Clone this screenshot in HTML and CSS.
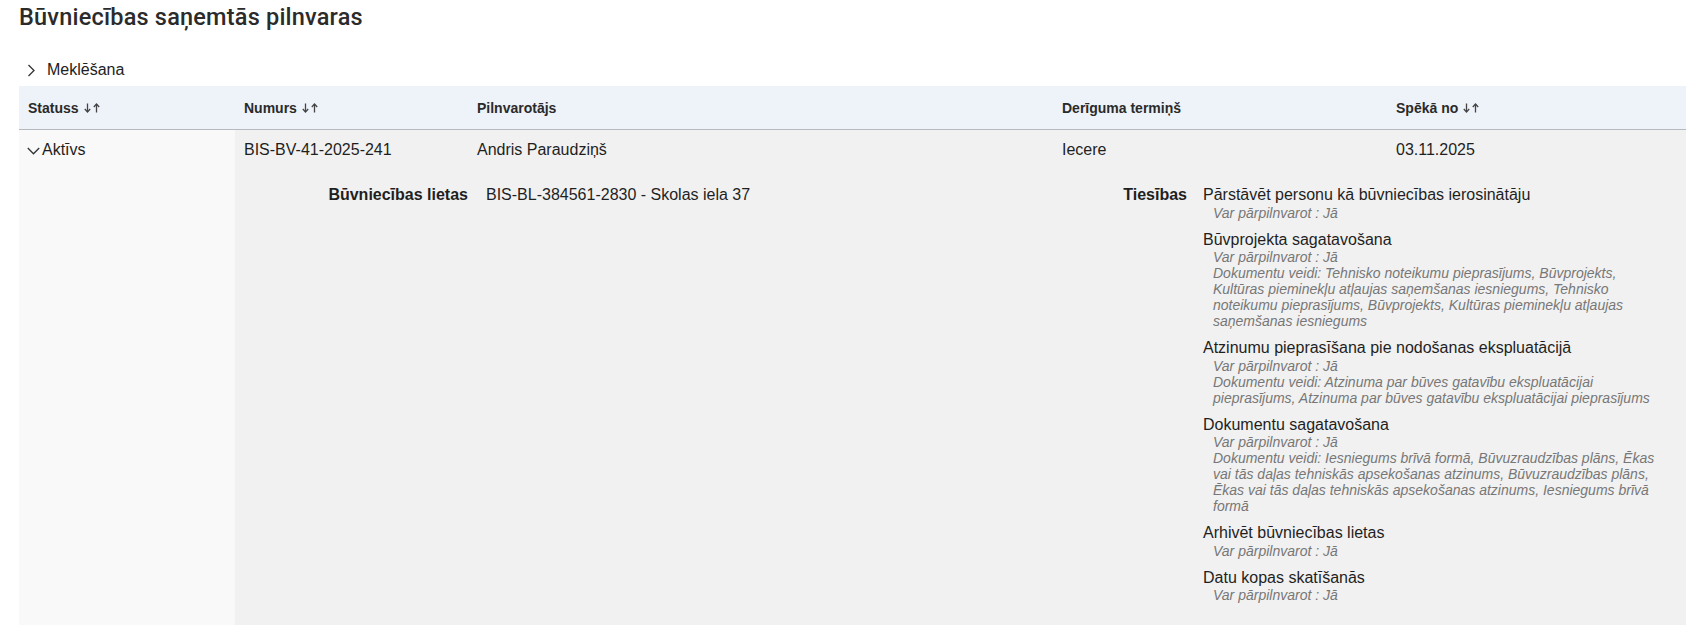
FILE: index.html
```html
<!DOCTYPE html>
<html lang="lv">
<head>
<meta charset="utf-8">
<title>Būvniecības saņemtās pilnvaras</title>
<link rel="stylesheet" href="styles.css">
</head>
<body>
<main class="page">
  <h1 class="page-title">Būvniecības saņemtās pilnvaras</h1>

  <button class="search-toggle" type="button">
    <svg class="chev-right" width="8" height="13" viewBox="0 0 8 13"><polyline points="1.5,1 7,6.5 1.5,12" fill="none" stroke="#333" stroke-width="1.3"/></svg>
    <span>Meklēšana</span>
  </button>

  <div class="grid-table">
    <div class="th">Statuss <svg class="sort" width="17" height="10" viewBox="0 0 17 10"><g fill="none" stroke="#444" stroke-width="1.3"><line x1="3.5" y1="0.5" x2="3.5" y2="9"/><polyline points="0.8,6 3.5,9 6.2,6"/><line x1="12.5" y1="1" x2="12.5" y2="9.5"/><polyline points="9.8,4 12.5,1 15.2,4"/></g></svg></div>
    <div class="th">Numurs <svg class="sort" width="17" height="10" viewBox="0 0 17 10"><g fill="none" stroke="#444" stroke-width="1.3"><line x1="3.5" y1="0.5" x2="3.5" y2="9"/><polyline points="0.8,6 3.5,9 6.2,6"/><line x1="12.5" y1="1" x2="12.5" y2="9.5"/><polyline points="9.8,4 12.5,1 15.2,4"/></g></svg></div>
    <div class="th">Pilnvarotājs</div>
    <div class="th">Derīguma termiņš</div>
    <div class="th">Spēkā no <svg class="sort" width="17" height="10" viewBox="0 0 17 10"><g fill="none" stroke="#444" stroke-width="1.3"><line x1="3.5" y1="0.5" x2="3.5" y2="9"/><polyline points="0.8,6 3.5,9 6.2,6"/><line x1="12.5" y1="1" x2="12.5" y2="9.5"/><polyline points="9.8,4 12.5,1 15.2,4"/></g></svg></div>

    <div class="td status-cell"><svg class="chev-down" width="13" height="8" viewBox="0 0 13 8"><polyline points="0.8,1 6.5,6.8 12.2,1" fill="none" stroke="#333" stroke-width="1.3"/></svg>Aktīvs</div>
    <div class="td">BIS-BV-41-2025-241</div>
    <div class="td">Andris Paraudziņš</div>
    <div class="td">Iecere</div>
    <div class="td">03.11.2025</div>

    <div class="detail">
      <div class="detail-label">Būvniecības lietas</div>
      <div class="detail-value">BIS-BL-384561-2830 - Skolas iela 37</div>
      <div class="detail-label">Tiesības</div>
      <div class="detail-value rights">
        <div class="right">
          <div class="right-name">Pārstāvēt personu kā būvniecības ierosinātāju</div>
          <div class="right-meta">Var pārpilnvarot : Jā</div>
        </div>
        <div class="right">
          <div class="right-name">Būvprojekta sagatavošana</div>
          <div class="right-meta">Var pārpilnvarot : Jā</div>
          <div class="right-meta">Dokumentu veidi: Tehnisko noteikumu pieprasījums, Būvprojekts, Kultūras pieminekļu atļaujas saņemšanas iesniegums, Tehnisko noteikumu pieprasījums, Būvprojekts, Kultūras pieminekļu atļaujas saņemšanas iesniegums</div>
        </div>
        <div class="right">
          <div class="right-name">Atzinumu pieprasīšana pie nodošanas ekspluatācijā</div>
          <div class="right-meta">Var pārpilnvarot : Jā</div>
          <div class="right-meta">Dokumentu veidi: Atzinuma par būves gatavību ekspluatācijai pieprasījums, Atzinuma par būves gatavību ekspluatācijai pieprasījums</div>
        </div>
        <div class="right">
          <div class="right-name">Dokumentu sagatavošana</div>
          <div class="right-meta">Var pārpilnvarot : Jā</div>
          <div class="right-meta">Dokumentu veidi: Iesniegums brīvā formā, Būvuzraudzības plāns, Ēkas vai tās daļas tehniskās apsekošanas atzinums, Būvuzraudzības plāns, Ēkas vai tās daļas tehniskās apsekošanas atzinums, Iesniegums brīvā formā</div>
        </div>
        <div class="right">
          <div class="right-name">Arhivēt būvniecības lietas</div>
          <div class="right-meta">Var pārpilnvarot : Jā</div>
        </div>
        <div class="right">
          <div class="right-name">Datu kopas skatīšanās</div>
          <div class="right-meta">Var pārpilnvarot : Jā</div>
        </div>
      </div>
    </div>
  </div>
</main>
</body>
</html>
```

FILE: styles.css
```css
html, body {
  margin: 0;
  padding: 0;
  background: #ffffff;
}

body {
  font-family: "Liberation Sans", Arial, sans-serif;
  font-size: 16px;
  color: #1f1f1f;
}

.page {
  padding: 0 9px 0 19px;
}

.page-title {
  margin: 0;
  padding-top: 3px;
  font-family: Roboto, "Liberation Sans", sans-serif;
  font-weight: 500;
  font-size: 23.5px;
  letter-spacing: 0.2px;
  line-height: 28px;
  color: #2b2b2b;
}

.search-toggle {
  display: flex;
  align-items: center;
  margin-top: 29px;
  height: 20px;
  padding: 0 0 0 8px;
  border: 0;
  background: none;
  font-family: "Liberation Sans", Arial, sans-serif;
  font-size: 16px;
  line-height: 20px;
  color: #222;
  cursor: pointer;
}

.chev-right {
  display: block;
  margin-right: 12px;
}

.grid-table {
  margin-top: 6px;
  display: grid;
  grid-template-columns: 216px 233px 585px 334px 1fr;
}

.th {
  height: 43px;
  display: flex;
  align-items: center;
  padding: 0 9px;
  background: #eef2f9;
  border-bottom: 1px solid #b6b9be;
  font-weight: bold;
  font-size: 14px;
  color: #2a2a2a;
}

.sort {
  display: block;
  margin-left: 5px;
}

.td {
  padding: 11px 9px 10px;
  background: #f1f1f1;
  line-height: 18px;
}

.status-cell {
  grid-row: span 2;
  background: #f9f9f9;
  padding-left: 8px;
  display: flex;
  align-items: flex-start;
}

.chev-down {
  display: block;
  margin: 6px 2px 0 0;
  flex: none;
}

.detail {
  grid-column: 2 / 6;
  display: grid;
  grid-template-columns: 233px 619px 100px 1fr;
  align-items: start;
  background: #f1f1f1;
  padding: 17px 0 22px;
  line-height: 18.5px;
}

.detail-label {
  font-weight: bold;
  text-align: right;
}

.detail-value {
  padding-left: 18px;
}

.rights {
  padding: 0 21px 0 16px;
  display: flex;
  flex-direction: column;
  gap: 10px;
}

.right-name {
  line-height: 18.5px;
}

.right-meta {
  padding-left: 10px;
  font-size: 14px;
  font-style: italic;
  color: #777777;
  line-height: 16px;
}
```
